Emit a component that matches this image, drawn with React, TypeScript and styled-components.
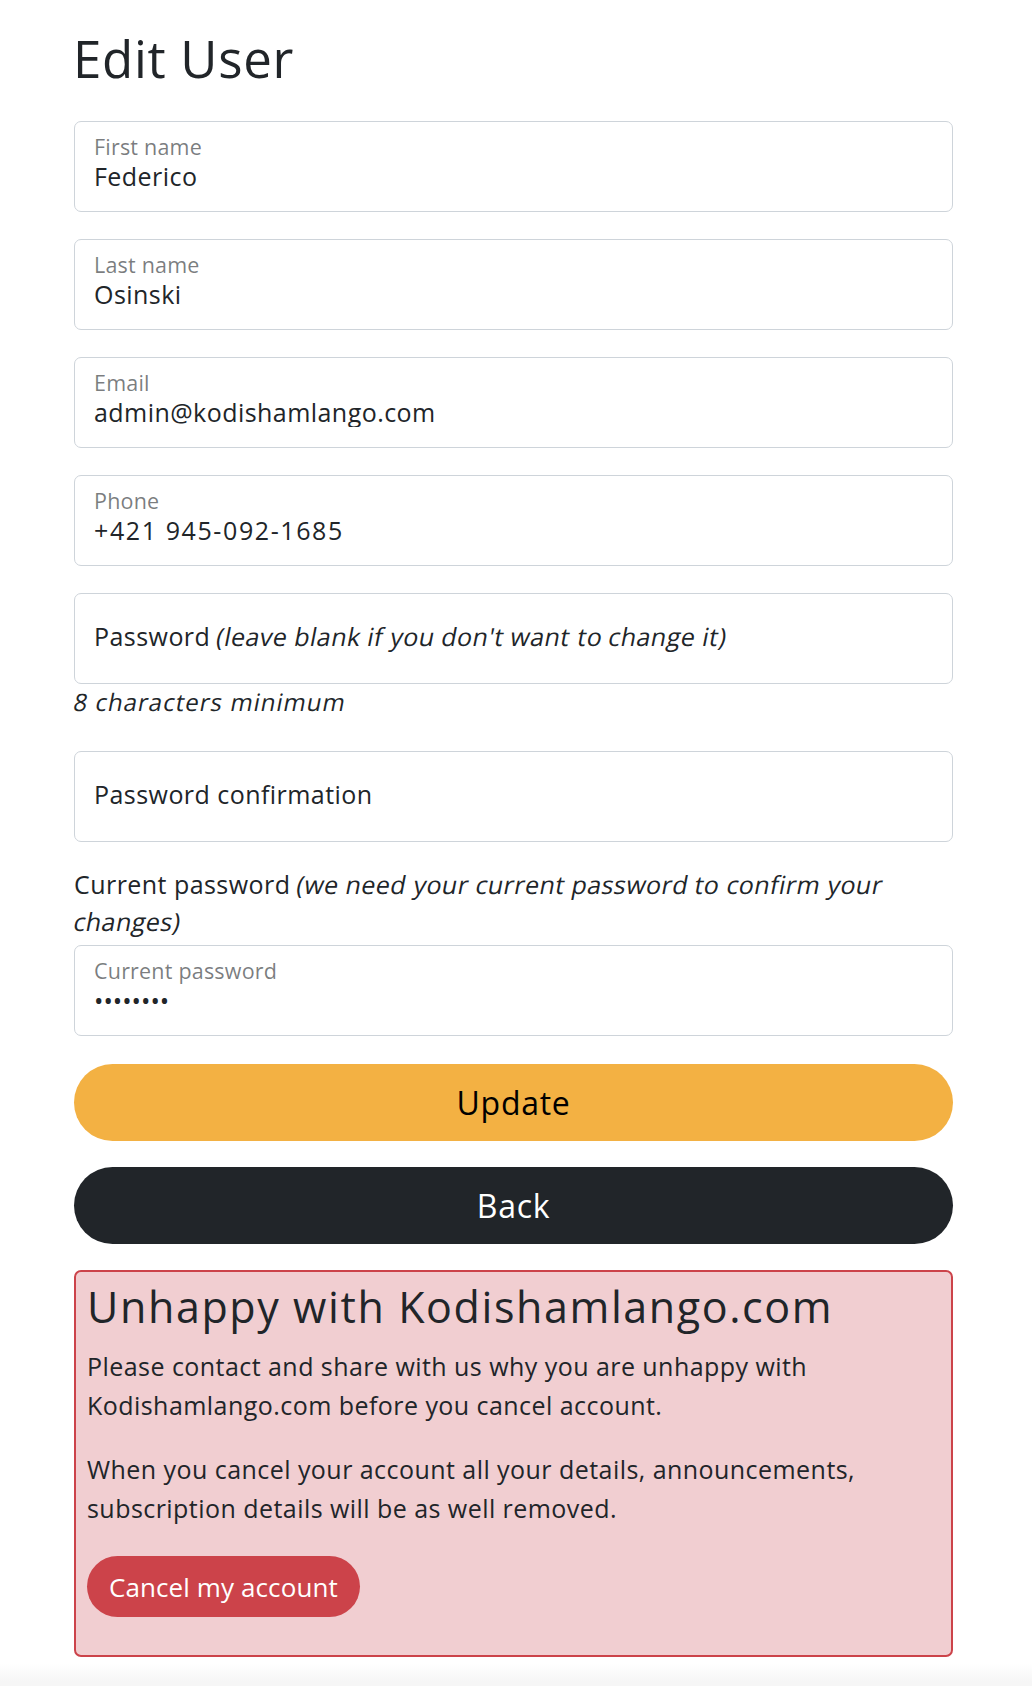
import React from "react";
import styled, { createGlobalStyle } from "styled-components";

const Global = createGlobalStyle`
  html, body { margin: 0; padding: 0; background: #ffffff; }
  body {
    font-family: "Open Sans", "Noto Sans", Arial, sans-serif;
    color: #212529;
    letter-spacing: 0.45px;
    -webkit-font-smoothing: antialiased;
  }
  * { box-sizing: border-box; }
`;

const Page = styled.main`
  width: 879px;
  margin-left: 74px;
  display: flex;
  flex-direction: column;
`;

const Title = styled.h1`
  margin: 28px 0 32px -1px;
  font-size: 51px;
  line-height: 61px;
  font-weight: 400;
  letter-spacing: 0.7px;
  color: #212529;
`;

const Form = styled.form`
  display: flex;
  flex-direction: column;
`;

/* synthesized oblique, like the reference's slanted regular face */
const ObliqueWord = styled.span`
  display: inline-block;
  font-style: normal;
  transform: skewX(-11deg);
`;

function Slanted({ text }: { text: string }) {
  const words = text.split(" ");
  return (
    <>
      {words.map((w, i) => (
        <React.Fragment key={i}>
          {i > 0 ? " " : null}
          <ObliqueWord>{w}</ObliqueWord>
        </React.Fragment>
      ))}
    </>
  );
}

const FieldBox = styled.div<{ $idle?: boolean }>`
  height: 91px;
  border: 1px solid #ced4da;
  border-radius: 7px;
  background: #fff;
  padding: ${(p) => (p.$idle ? "27px 19px 0" : "12px 19px 0")};
  display: flex;
  flex-direction: column;
  margin-bottom: 27px;
`;

const FloatLabel = styled.label`
  font-size: 21.5px;
  line-height: 26px;
  letter-spacing: 0.2px;
  color: rgba(33, 37, 41, 0.6);
`;

const IdleLabel = styled.label`
  font-size: 25px;
  line-height: 30px;
  color: #212529;
`;

const FieldInput = styled.input<{ $spacing?: number }>`
  margin-top: 1px;
  height: 30px;
  line-height: 30px;
  border: 0;
  padding: 0;
  outline: none;
  background: transparent;
  font-family: inherit;
  font-size: 25px;
  color: #212529;
  width: 100%;
  letter-spacing: ${(p) => p.$spacing ?? 0.45}px;
`;

const Helper = styled.div`
  font-size: 24px;
  line-height: 36px;
  letter-spacing: 1px;
  color: #212529;
  margin: -27px 0 31px;
`;

const BlockLabel = styled.label`
  display: block;
  font-size: 25px;
  line-height: 37px;
  margin: -3px 0 5px;
  color: #212529;
`;

const PillButton = styled.button<{ $variant: "warning" | "dark" }>`
  height: 77px;
  width: 100%;
  border: 0;
  border-radius: 40px;
  font-family: inherit;
  font-size: 32px;
  letter-spacing: 0.7px;
  display: flex;
  align-items: center;
  justify-content: center;
  cursor: pointer;
  background: ${(p) => (p.$variant === "warning" ? "#f3b143" : "#212529")};
  color: ${(p) => (p.$variant === "warning" ? "#000000" : "#ffffff")};
  margin-top: ${(p) => (p.$variant === "warning" ? "1px" : "26px")};
`;

const Alert = styled.section`
  margin-top: 26px;
  border: 2px solid #cc434a;
  border-radius: 7px;
  background: #f1ced1;
  padding: 10px 14px 38px 11px;
  display: flex;
  flex-direction: column;
  align-items: flex-start;
`;

const AlertTitle = styled.h2`
  margin: 0 0 15px;
  font-size: 43px;
  line-height: 50px;
  font-weight: 400;
  letter-spacing: 1.6px;
  color: #212529;
`;

const AlertText = styled.p<{ $last?: boolean }>`
  margin: 0 0 ${(p) => (p.$last ? 28 : 25)}px;
  font-size: 25px;
  line-height: 39px;
  color: #212529;
`;

const DangerButton = styled.button`
  height: 61px;
  border: 0;
  border-radius: 31px;
  padding: 0 22px;
  background: #cc434a;
  color: #ffffff;
  font-family: inherit;
  font-size: 26px;
  letter-spacing: 0.1px;
  cursor: pointer;
`;

const Footer = styled.footer`
  margin-top: 6px;
  height: 60px;
  background: linear-gradient(#ffffff, #f6f6f6 18px);
`;

type FieldProps = { label: string; value: string; type?: string; spacing?: number };

function Field({ label, value, type = "text", spacing }: FieldProps) {
  return (
    <FieldBox>
      <FloatLabel>{label}</FloatLabel>
      <FieldInput type={type} defaultValue={value} readOnly $spacing={spacing} />
    </FieldBox>
  );
}

export default function App() {
  return (
    <>
      <Global />
      <Page>
        <Title>Edit User</Title>
        <Form onSubmit={(e) => e.preventDefault()}>
          <Field label="First name" value="Federico" />
          <Field label="Last name" value="Osinski" />
          <Field label="Email" value="admin@kodishamlango.com" type="email" />
          <Field label="Phone" value="+421 945-092-1685" spacing={1.6} />
          <FieldBox $idle>
            <IdleLabel>
              Password <Slanted text="(leave blank if you don't want to change it)" />
            </IdleLabel>
          </FieldBox>
          <Helper>
            <Slanted text="8 characters minimum" />
          </Helper>
          <FieldBox $idle>
            <IdleLabel>Password confirmation</IdleLabel>
          </FieldBox>
          <BlockLabel>
            Current password <Slanted text="(we need your current password to confirm your changes)" />
          </BlockLabel>
          <Field label="Current password" value="12345678" type="password" spacing={0} />
          <PillButton type="submit" $variant="warning">Update</PillButton>
          <PillButton type="button" $variant="dark">Back</PillButton>
        </Form>
        <Alert>
          <AlertTitle>Unhappy with Kodishamlango.com</AlertTitle>
          <AlertText>
            Please contact and share with us why you are unhappy with Kodishamlango.com before you cancel account.
          </AlertText>
          <AlertText $last>
            When you cancel your account all your details, announcements, subscription details will be as well removed.
          </AlertText>
          <DangerButton type="button">Cancel my account</DangerButton>
        </Alert>
      </Page>
      <Footer />
    </>
  );
}
